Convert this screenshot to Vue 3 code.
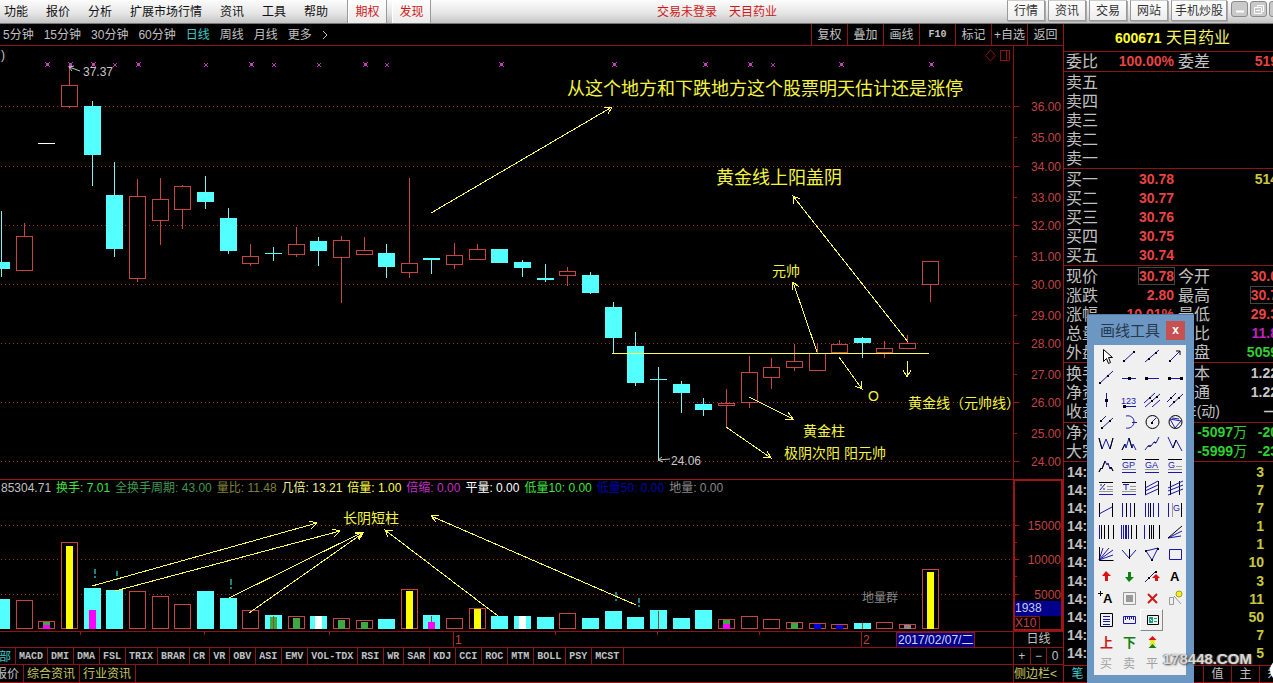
<script setup>
const menus = ['功能', '报价', '分析', '扩展市场行情', '资讯', '工具', '帮助']
const quickLinks = ['行情', '资讯', '交易', '网站', '手机炒股']
const periods = ['5分钟', '15分钟', '30分钟', '60分钟', '日线', '周线', '月线', '更多']
const chartActions = ['复权', '叠加', '画线', 'F10', '标记', '+自选', '返回']
const indicators = ['全部', 'MACD', 'DMI', 'DMA', 'FSL', 'TRIX', 'BRAR', 'CR', 'VR', 'OBV', 'ASI', 'EMV', 'VOL-TDX', 'RSI', 'WR', 'SAR', 'KDJ', 'CCI', 'ROC', 'MTM', 'BOLL', 'PSY', 'MCST']
const feeds = ['报价', '综合资讯', '行业资讯']

// kind, body top, body bottom, wick top, wick bottom, volume top, inner volume marks
const days = [
  ['c', 262, 269, 211, 277, 599],
  ['r', 236, 271, 223, 271, 600],
  ['w', 143, 144, 143, 144, 621, [['green', 622], ['magenta', 625]]],
  ['r', 85, 107, 66, 108, 542, [['yellow', 546]]],
  ['c', 106, 155, 101, 186, 588, [['magenta', 610]]],
  ['c', 195, 249, 162, 257, 590],
  ['r', 196, 279, 179, 282, 591],
  ['r', 199, 221, 178, 245, 596],
  ['r', 186, 210, 185, 229, 604],
  ['c', 192, 202, 176, 209, 591],
  ['c', 218, 251, 208, 254, 598],
  ['r', 256, 264, 244, 266, 610],
  ['c', 253, 254, 247, 261, 615, [['green', 617], ['slit', 616]]],
  ['r', 244, 255, 227, 257, 616, [['green', 618]]],
  ['c', 241, 251, 237, 266, 616, [['white', 616]]],
  ['r', 240, 258, 236, 303, 618, [['green', 620]]],
  ['r', 250, 255, 237, 255, 620, [['green', 622]]],
  ['c', 253, 267, 244, 278, 619],
  ['r', 263, 273, 178, 278, 589, [['yellow', 591]]],
  ['c', 258, 260, 258, 274, 615, [['slit', 616], ['magenta', 622]]],
  ['r', 255, 265, 243, 269, 618],
  ['r', 249, 260, 244, 260, 608, [['yellow', 609]]],
  ['c', 249, 263, 249, 263, 616],
  ['c', 262, 268, 260, 277, 616, [['white', 616]]],
  ['c', 278, 280, 264, 282, 617],
  ['r', 271, 276, 267, 286, 613],
  ['c', 275, 293, 272, 294, 618],
  ['c', 307, 338, 302, 353, 611],
  ['c', 346, 383, 332, 386, 617],
  ['c', 379, 380, 367, 460, 610, [['slit', 611]]],
  ['c', 384, 393, 381, 413, 618],
  ['c', 404, 410, 398, 416, 610],
  ['r', 403, 406, 389, 427, 619, [['green', 620], ['magenta', 624]]],
  ['r', 372, 403, 356, 408, 616],
  ['r', 367, 378, 358, 389, 619],
  ['r', 361, 368, 344, 371, 622, [['green', 623]]],
  ['r', 353, 371, 343, 371, 623, [['blue', 624]]],
  ['r', 344, 353, 340, 353, 624, [['blue', 625]]],
  ['c', 338, 343, 337, 358, 623, [['slit', 623]]],
  ['r', 348, 353, 341, 358, 622],
  ['r', 343, 349, 335, 349, 624, [['gray', 625]]],
  ['r', 261, 285, 261, 302, 569, [['yellow', 572]]]
].map(([kind, top, bottom, high, low, vol, marks = []], i) => ({
  kind, top, bottom, high, low, vol, marks,
  x: Math.floor(22.65 * i - 6.4),
  up: kind === 'r',
  volUp: kind !== 'c'
}))

const gridY = [106, 166, 225, 284, 343, 402, 461]
const prices = [[36, 106], [35, 137], [34, 166], [33, 197], [32, 225], [31, 256], [30, 284], [29, 315], [28, 343], [27, 374], [26, 402], [25, 433], [24, 461]]
const volGrid = [[15000, 525], [10000, 559], [5000, 594]]
const bigMarks = [47, 70, 93, 138, 251, 365, 501, 614, 705, 750, 841, 931]
const smallMarks = [115, 206, 274, 319, 387, 773]

function arrow(x1, y1, x2, y2, size = 8) {
  const a = Math.atan2(y2 - y1, x2 - x1)
  const p = (d) => `${Math.round(x2 - size * Math.cos(a + d))} ${Math.round(y2 - size * Math.sin(a + d))}`
  return `M${x1} ${y1}L${x2} ${y2}M${p(0.5)}L${x2} ${y2}L${p(-0.5)}`
}
const priceArrows = [
  arrow(431, 213, 612, 107), arrow(908, 342, 793, 196), arrow(817, 352, 793, 282),
  arrow(839, 357, 862, 389), arrow(907, 361, 907, 377), arrow(749, 397, 793, 419), arrow(726, 427, 771, 458)
]
const volArrows = [
  arrow(92, 586, 317, 523), arrow(115, 591, 340, 531), arrow(229, 598, 363, 532),
  arrow(249, 613, 363, 533), arrow(498, 616, 385, 530), arrow(636, 605, 431, 516)
]
const notes = [
  [567, 95, 18, '从这个地方和下跌地方这个股票明天估计还是涨停'],
  [716, 184, 18, '黄金线上阳盖阴'],
  [772, 276, 14, '元帅'],
  [868, 401, 14, 'O'],
  [908, 408, 14, '黄金线（元帅线）'],
  [803, 436, 14, '黄金柱'],
  [784, 458, 14, '极阴次阳 阳元帅']
]
const stats = [
  ['85304.71', 'silver'], ['换手: 7.01', 'lime'], ['全换手周期: 43.00', 'moss'], ['量比: 11.48', 'olive'],
  ['几倍: 13.21', 'lemon'], ['倍量: 1.00', 'yellow'], ['倍缩: 0.00', 'violet'], ['平量: 0.00', 'bright'],
  ['低量10: 0.00', 'lime'], ['低量50: 0.00', 'navy'], ['地量: 0.00', 'ash']
]

const asks = ['卖五', '卖四', '卖三', '卖二', '卖一']
const bids = [['买一', '30.78', '514'], ['买二', '30.77', ''], ['买三', '30.76', ''], ['买四', '30.75', ''], ['买五', '30.74', '']]
const quote = [
  ['现价', '30.78', '今开', '30.0', 'red', true, false],
  ['涨跌', '2.80', '最高', '30.7', 'red', false, true],
  ['涨幅', '10.01%', '最低', '29.3', 'red'],
  ['总量', '', '量比', '11.8', 'violet'],
  ['外盘', '', '内盘', '5059', 'lime']
]
const basics = [['换手', '股本', '1.22'], ['净资', '流通', '1.22'], ['收益', 'PE(动)', '—']]
const flows = [['净流', '-5097', '-20'], ['大宗', '-5999', '-23']]
const ticks = [3, 7, 7, 1, 1, 10, 3, 11, 50, 7, 5]

const dot = (x, y) => `M${x - 1} ${y - 1}h3v3h-3z`
const pip = (x, y) => `M${x - 1} ${y - 1}h2v2h-2z`
// Each tool: name, then layers of [class, path], then optional glyph [class, x, y, text]
const tools = [
  ['选择', [['white', 'M5.5 1.5v12l3-3 2 5 2-1-2-5h4z']]],
  ['线段', [['b', 'M2 14L14 3'], ['kf', pip(3, 13) + pip(13, 4)]]],
  ['直线', [['b', 'M1 14L15 2'], ['kf', pip(5, 11) + pip(12, 5)]]],
  ['箭头', [['b', 'M2 14L13 3'], ['k', 'M9 3h4v4'], ['kf', pip(3, 13)]]],
  ['射线', [['b', 'M1 14L15 1'], ['kf', pip(2, 13) + pip(10, 6)]]],
  ['水平直线', [['b', 'M1 8.5h14'], ['kf', dot(8, 8)]]],
  ['水平射线', [['b', 'M2 8.5h13'], ['kf', dot(2, 8)]]],
  ['水平线段', [['b', 'M2 8.5h12'], ['kf', dot(2, 8) + dot(14, 8)]]],
  ['垂直线', [['b', 'M8.5 1v14'], ['kf', dot(8, 8)]]],
  ['价格标注', [['b', 'M3 14.5h12'], ['kf', dot(3, 14)]], ['tb', 0, 12, '123']],
  ['平行线', [['b', 'M0 11L11 1M1 15L16 2M8 15L16 8'], ['kf', pip(6, 6) + pip(8, 9) + pip(13, 5)]]],
  ['等距线', [['b', 'M0 10L9 1M2 15L16 2'], ['kf', pip(4, 6) + pip(7, 10) + pip(12, 6)]]],
  ['平行线段', [['b', 'M2 8L8 2M3 15L15 4'], ['kf', pip(3, 7) + pip(4, 14) + pip(12, 7)]]],
  ['圆弧', [['b', 'M5 2c5-1 8 2 8 6s-4 7-8 6M11 8.500h5']]],
  ['圆', [['k', 'M15 8a6.5 6.5 0 1 1-13 0a6.5 6.5 0 1 1 13 0'], ['b', 'M8 8L12 4'], ['kf', pip(8, 9)]]],
  ['外接圆', [['k', 'M15 8a6.5 6.5 0 1 1-13 0a6.5 6.5 0 1 1 13 0'], ['b', 'M3 5l11 2-6 7zM5 4l7 1']]],
  ['W波浪', [['b', 'M1 2l3 11 4-10 4 10 3-11'], ['k', 'M1 2l3 11M12 13l3-11']]],
  ['头肩形', [['b', 'M1 14l3-6 1 4 3-10 3 10 1-4 3 6'], ['k', 'M1 14l3-6M8 2l3 10']]],
  ['上升浪', [['b', 'M1 14l3-4h3l3-4 2 1 3-6'], ['k', 'M4 10h3M10 6l2 1']]],
  ['下降浪', [['b', 'M1 1l5 11 3-8 6 11'], ['k', 'M6 12l3-8']]],
  ['八浪线', [['b', 'M1 14l2-4 1 1 3-8 2 4 1-2 2 6 1-2 2 4'], ['k', 'M1 14l2-4 1 1 3-8M12 11l1-2 2 4']]],
  ['黄金价位', [['k', 'M1 1.5h14'], ['g', 'M1 11.5h14'], ['b', 'M1 14.5h14']], ['tb', 1, 10, 'GP']],
  ['黄金目标', [['k', 'M1 1.5h14'], ['g', 'M1 11.5h14'], ['b', 'M1 14.5h14']], ['tb', 1, 10, 'GA']],
  ['黄金分割', [['k', 'M1 1.5h14'], ['g', 'M9 8.5h6M1 11.5h14'], ['b', 'M1 14.5h14']], ['tb', 1, 10, 'G']],
  ['百分比', [['k', 'M1 2.5h14'], ['g', 'M9 6.5h6M9 9.5h6M1 11.5h14'], ['b', 'M1 14.5h14M2 10l5-6M2 5h2M5 9h2']]],
  ['波段线', [['k', 'M1 2.5h14'], ['g', 'M9 6.5h6M9 9.5h6M1 11.5h14'], ['b', 'M1 14.5h14M2 4.5h6M5 4v6']]],
  ['通道线', [['k', 'M1.5 1v14M14.5 1v14'], ['b', 'M1 8L14 1M1 11L14 5M1 15L14 9']]],
  ['回归带', [['k', 'M3.5 1v14M12.5 1v14'], ['b', 'M1 8L16 1M1 11L16 5M1 15L16 9']]],
  ['线性回归', [['k', 'M1.5 1v14M14.5 1v14'], ['b', 'M1 12L14 5']]],
  ['周期线', [['b', 'M1.5 1v14M9.5 1v14'], ['k', 'M5.5 1v14M13.5 1v14']]],
  ['等距周期', [['b', 'M1.5 1v14M4.5 1v14M9.5 1v14M14.5 1v14'], ['k', 'M6.5 1v14']]],
  ['黄金周期', [['b', 'M1.5 1v14'], ['g', 'M5.5 1v14'], ['k', 'M14.5 1v14']], ['tb', 6, 9, 'G']],
  ['斐波那契', [['b', 'M1.5 1v14'], ['k', 'M3.5 1v14M6.5 1v14M10.5 1v14M15.5 1v14']]],
  ['卢卡斯', [['b', 'M.5 1v14M2.5 1v14M4.5 1v14M5.5 1v14M7.5 1v14'], ['k', 'M10.5 1v14M15.5 1v14']]],
  ['江恩周期', [['b', 'M.5 1v14'], ['k', 'M5.5 1v14M7.5 1v14M9.5 1v14M15.5 1v14']]],
  ['阻速线', [['b', 'M1 14L15 7M1 14l13-2'], ['k', 'M1 14L15 2']]],
  ['江恩角度', [['b', 'M1 14L5 2M1 14L11 2M1 14L15 4M1 14L15 9'], ['k', 'M1.5 1v13.5h14']]],
  ['三叉线', [['b', 'M1 4l7 8 7-8'], ['k', 'M8.5 3v10']]],
  ['三角形', [['b', 'M2 5l12-3-6 12z'], ['kf', pip(2, 5) + pip(14, 3) + pip(8, 14)]]],
  ['矩形', [['b', 'M2.5 3.5h12v10h-12z']]],
  ['上箭头', [['rf', 'M8 3l5 5h-3v5h-3V8H4z']]],
  ['下箭头', [['nf', 'M8 14l5-5h-3V4h-3v5H4z']]],
  ['箭头标记', [['b', 'M1 14L12 3'], ['kf', pip(5, 10) + pip(12, 4)], ['rf', 'M12 6l4 4h-2v3h-3v-3h-3z']]],
  ['文字', [], ['tk', 3, 13, 'A']],
  ['注释', [['k', 'M0 3.5h5M2.5 1v5']], ['tk', 5, 13, 'A']],
  ['设置', [['g', 'M2.5 2.5h12v12h-12z'], ['gf', 'M5 5h7v7H5z']]],
  ['删除', [['r2', 'M4 4l9 9M13 4l-9 9']]],
  ['隐藏', [['g', 'M2.5 7.5h4v7h-4zM7 6l7 8'], ['yf', 'M15 4a3 3 0 1 1-6 0a3 3 0 1 1 6 0']]],
  ['列表', [['k', 'M2.5 1.5h12v13h-12z'], ['b', 'M5 4.5h7M5 7.5h7M5 9.5h7M5 12.5h7']]],
  ['标尺', [['b', 'M2.5 4.5h12v7h-12z'], ['b', 'M4.5 5v3M6.5 5v2M8.5 5v3M10.5 5v2M12.5 5v3']]],
  ['联动', [['k', 'M3.5 3.5h11v9h-11z'], ['tf', 'M5 5h4v6H5z'], ['teal', 'M10 6.5h3M10 9.5h3'], ['wl', 'M6 7l2 2']], null, true],
  null,
  ['上', [], ['tr', 2, 13, '上']],
  ['下', [], ['tn', 2, 13, '下']],
  ['涨跌标记', [['yf2', 'M5 6h7l-2 2 2 3H5l2-3z'], ['rf', 'M8.5 2l4 4h-8z'], ['nf', 'M8.5 10l4 4h-8z']]],
  null,
  ['买', [], ['tg', 2, 12, '买']],
  ['卖', [], ['tg', 2, 12, '卖']],
  ['平', [], ['tg', 2, 12, '平']],
  null
]
</script>

<template>
  <div class="terminal">
    <header class="menubar">
      <nav class="menus">
        <button v-for="m in menus" :key="m">{{ m }}</button>
      </nav>
      <nav class="featured">
        <button>期权</button>
        <button>发现</button>
      </nav>
      <div class="session"><span>交易未登录</span><span>天目药业</span></div>
      <nav class="quick">
        <button v-for="q in quickLinks" :key="q">{{ q }}</button>
      </nav>
      <div class="winctl">
        <button aria-label="最小化"><svg width="16" height="15"><path d="M4 9.5h8" /></svg></button>
        <button aria-label="还原"><svg width="16" height="15"><path class="thin" d="M6.5 5.5v-2h6v6h-2M3.5 5.5h7v6h-7zM5 8.5h4" /></svg></button>
        <button aria-label="关闭"><svg width="16" height="15"><path d="M4 4l8 7M12 4l-8 7" /></svg></button>
      </div>
    </header>

    <div class="body">
      <main class="left">
        <div class="toolbar">
          <nav class="periods">
            <button v-for="p in periods" :key="p" :class="{ on: p === '日线' }">{{ p }}</button>
            <button aria-label="展开周期"><svg width="6" height="12"><path class="chev" d="M1 2l4 4-4 4" /></svg></button>
          </nav>
          <nav class="actions">
            <button v-for="a in chartActions" :key="a" :class="{ mono: a === 'F10' }">{{ a }}</button>
          </nav>
        </div>

        <section class="pane price">
          <svg class="plot" height="433" role="img" aria-label="日线K线图">
            <g transform="translate(0,-46)">
              <path v-for="y in gridY" :key="y" class="grid" :d="`M1 ${y}.5H2000`" />
              <g v-for="(d, i) in days" :key="i" :class="['k', d.kind]">
                <template v-if="d.up">
                  <rect class="wick" :x="d.x + 8" :y="d.high" width="1" :height="d.top - d.high" />
                  <rect class="wick" :x="d.x + 8" :y="d.bottom" width="1" :height="d.low - d.bottom" />
                  <rect class="box" :x="d.x + .5" :y="d.top + .5" width="16" :height="d.bottom - d.top - 1" />
                </template>
                <template v-else>
                  <rect class="wick" :x="d.x + 8" :y="d.high" width="1" :height="d.low - d.high" />
                  <rect class="fill" :x="d.x" :y="d.top" width="17" :height="d.bottom - d.top" />
                </template>
              </g>
              <g v-for="x in bigMarks" :key="x">
                <path class="mark" :d="`M${x - 2} 62l5 5M${x + 3} 62l-5 5`" />
                <rect class="core" :x="x - 1" y="63" width="3" height="3" />
              </g>
              <path v-for="x in smallMarks" :key="x" class="mark" :d="`M${x - 2} 63l4 4M${x + 2} 63l-4 4`" />
              <path class="note-line" d="M612 353.5H929" />
              <path v-for="d in priceArrows" :key="d" class="note-line" :d="d" />
              <path class="peak" :d="arrow(80, 71, 69, 67, 5)" />
              <path class="peak" :d="arrow(670, 459, 658, 460, 5)" />
              <text class="peak-label" x="83" y="76">37.37</text>
              <text class="peak-label" x="671" y="465">24.06</text>
              <text class="peak-label" x="1" y="59">)</text>
              <text v-for="n in notes" :key="n[3]" class="note" :x="n[0]" :y="n[1]" :font-size="n[2]">{{ n[3] }}</text>
              <path class="corner" d="M990.5 50l5 5.5-5 5.5-5-5.5zM1000.5 50.5h9v10h-9zM1006.5 50v10" />
            </g>
          </svg>
          <svg class="axis" width="50" height="433">
            <g transform="translate(0,-46)">
              <g v-for="([p, y], i) in prices" :key="p">
                <path class="tick" :d="`M0 ${y}.5h${i % 2 ? 3 : 5}`" />
                <text class="scale" x="47" :y="y + 5">{{ p.toFixed(2) }}</text>
              </g>
            </g>
          </svg>
        </section>

        <section class="pane volume">
          <div class="volplot">
            <div class="stats"><span v-for="s in stats" :key="s[0]" :class="s[1]">{{ s[0] }}</span></div>
            <svg class="plot" height="135" role="img" aria-label="成交量图">
              <g transform="translate(0,-496)">
                <path v-for="g in volGrid" :key="g[0]" class="grid" :d="`M1 ${g[1]}.5H2000`" />
                <g v-for="(d, i) in days" :key="i" :class="['k', d.volUp ? 'r' : 'c']">
                  <rect v-if="d.volUp" class="box" :x="d.x + .5" :y="d.vol + .5" width="16" :height="628 - d.vol" />
                  <rect v-else class="fill" :x="d.x" :y="d.vol" width="17" :height="629 - d.vol" />
                  <rect v-for="m in d.marks" :key="m[0]" :class="'v-' + m[0]" :x="m[0] === 'slit' ? d.x + 8 : d.x + 5" :y="m[1]" :width="m[0] === 'slit' ? 1 : 7" :height="629 - m[1]" />
                </g>
                <path class="bang" d="M95 569v5M95 576v2M117 571v5M117 578v2M231 579v6M231 587v2M616 592v5M616 599v2M639 598v5M639 605v2" />
                <path v-for="d in volArrows" :key="d" class="note-line" :d="d" />
                <text class="note" x="343" y="523" font-size="14">长阴短柱</text>
                <text class="herd" x="862" y="602">地量群</text>
              </g>
            </svg>
          </div>
          <div class="volaxis">
            <svg width="46" height="120">
              <g transform="translate(0,-481)">
                <g v-for="g in volGrid" :key="g[0]">
                  <path class="tick" :d="`M0 ${g[1]}.5h4M0 ${g[1] + 17}.5h2`" />
                  <text class="scale" x="46" :y="g[1] + 5">{{ g[0] }}</text>
                </g>
              </g>
            </svg>
            <div class="cursor">1938</div>
            <div class="unit">X10</div>
          </div>
        </section>

        <section class="timeline">
          <svg class="plot" height="15">
            <path class="tick" d="M80.5 0v3M204.5 0v3M329.5 0v3M453.5 0v15M555.5 0v3M657.5 0v3M759.5 0v3M861.5 0v15" />
            <text class="month" x="455" y="12">1</text>
            <text class="month" x="863" y="12">2</text>
            <rect class="datebox" x="896.5" y=".5" width="78" height="15" />
            <text class="date" x="898" y="12">2017/02/07/二</text>
          </svg>
          <div class="side">日线</div>
        </section>

        <section class="tabs">
          <nav class="inds">
            <button v-for="n in indicators" :key="n" :class="{ cn: n === '全部' }">{{ n }}</button>
          </nav>
          <div class="side zoomers"><button>+</button><button>−</button><button>0</button></div>
        </section>

        <footer class="feeds">
          <nav>
            <button v-for="(f, i) in feeds" :key="f" :class="{ gray: !i }">{{ f }}</button>
          </nav>
          <button class="side">侧边栏&lt;</button>
        </footer>
      </main>

      <aside class="quotes">
        <h1><b>600671</b> 天目药业</h1>
        <table class="q first">
          <colgroup><col class="c1"><col class="c2"><col class="c3"><col class="c4"></colgroup>
          <tbody><tr><th>委比</th><td>100.00%</td><th>委差</th><td>519</td></tr></tbody>
        </table>
        <div class="sec">
          <table class="q">
            <tbody><tr v-for="a in asks" :key="a"><th>{{ a }}</th></tr></tbody>
          </table>
        </div>
        <div class="sec">
          <table class="q">
            <colgroup><col class="c1"><col class="c2"><col class="c3"><col class="c4"></colgroup>
            <tbody><tr v-for="b in bids" :key="b[0]"><th>{{ b[0] }}</th><td>{{ b[1] }}</td><th></th><td class="vol">{{ b[2] }}</td></tr></tbody>
          </table>
        </div>
        <div class="sec">
          <table class="q">
            <colgroup><col class="c1"><col class="c2"><col class="c3"><col class="c4"></colgroup>
            <tbody>
              <tr v-for="r in quote" :key="r[0]">
                <th>{{ r[0] }}</th><td><span :class="{ framed: r[5] }">{{ r[1] }}</span></td>
                <th>{{ r[2] }}</th><td :class="r[4]"><span :class="{ framed: r[6] }">{{ r[3] }}</span></td>
              </tr>
            </tbody>
          </table>
        </div>
        <div class="sec loose">
          <table class="q">
            <colgroup><col class="c1"><col class="c2"><col class="c3"><col class="c4"></colgroup>
            <tbody>
              <tr v-for="b in basics" :key="b[0]"><th>{{ b[0] }}</th><td></td><th :class="{ pe: b[1].length > 2 }">{{ b[1] }}</th><td class="plain">{{ b[2] }}</td></tr>
            </tbody>
          </table>
        </div>
        <div class="sec tight">
          <table class="q">
            <colgroup><col class="c1"><col class="f2"><col class="f3"></colgroup>
            <tbody>
              <tr v-for="f in flows" :key="f[0]"><th>{{ f[0] }}</th><td class="lime">{{ f[1] }}<i>万</i></td><td class="lime">{{ f[2] }}</td></tr>
            </tbody>
          </table>
        </div>
        <table class="trades">
          <tbody><tr v-for="(t, i) in ticks" :key="i"><th>14:</th><td>{{ t }}</td></tr></tbody>
        </table>
        <nav class="modes">
          <button class="on">笔</button><span class="rest"></span>
          <button>值</button><button>主</button><button>筹</button>
        </nav>
      </aside>
    </div>

    <section class="palette" aria-label="画线工具">
      <header><h2>画线工具</h2><button class="close" aria-label="关闭画线工具">x</button></header>
      <div class="tools">
        <template v-for="(t, i) in tools" :key="i">
          <button v-if="t" :aria-label="t[0]" :class="{ pressed: t[3] }">
            <svg width="16" height="16" viewBox="0 0 16 16">
              <path v-for="(l, j) in t[1]" :key="j" :class="'i-' + l[0]" :d="l[1]" />
              <text v-if="t[2]" :class="t[2][0]" :x="t[2][1]" :y="t[2][2]">{{ t[2][3] }}</text>
            </svg>
          </button>
          <span v-else></span>
        </template>
      </div>
    </section>
    <div class="watermark">178448.COM</div>
    <div class="bubble"></div>
  </div>
</template>

<style>
body { background: #000; overflow: hidden; }
</style>

<style scoped>
.terminal {
  position: relative; display: flex; flex-direction: column; min-height: 100vh; overflow: hidden;
  background: #000; color: #c0c0c0;
  font: 12px/14px "Liberation Sans", "Noto Sans CJK SC", sans-serif;
}
button { appearance: none; margin: 0; padding: 0; border: 0; background: none; color: inherit; font: inherit; white-space: nowrap; }
svg { display: block; }

.menubar { display: flex; height: 24px; box-sizing: border-box; border-bottom: 1px solid #777; background: linear-gradient(#fdfdfd, #e4e4e4 60%, #c4c4c4); color: #111; }
.menus { display: flex; gap: 18px; padding: 0 19px 0 4px; }
.featured { display: flex; gap: 5px; border-left: 1px solid #999; color: #d01818; }
.featured button { width: 39px; border-right: 1px solid #999; border-left: 1px solid #fff; background: linear-gradient(#fff, #eaeaea); }
.session { flex: 1; display: flex; gap: 12px; justify-content: center; align-items: center; padding-right: 4px; color: #d01818; }
.quick { display: flex; gap: 3px; }
.quick button { min-width: 38px; height: 21px; padding: 0 6px; border: 1px solid #999; border-top-color: #ccc; background: linear-gradient(#fff, #ececec); box-shadow: 1px 1px 0 #aaa; color: #333; }
.quick button:last-child { padding: 0 3px; }
.winctl { display: flex; gap: 2px; margin: 1px -13px 0 4px; }
.winctl button { width: 17px; height: 16px; border: 1px solid #8a8a8a; border-radius: 3px; background: #c9c9c9; overflow: hidden; }
.winctl path { fill: none; stroke: #fff; stroke-width: 2; }
.winctl .thin { stroke-width: 1; }

.body { flex: 1; display: flex; }
.left { flex: 1; min-width: 0; display: flex; flex-direction: column; }
.toolbar { display: flex; justify-content: space-between; height: 22px; box-sizing: border-box; border-bottom: 1px solid #8c1414; }
.periods { display: flex; gap: 10px; padding-left: 3px; }
.periods .on { color: #40c8c8; }
.chev { fill: none; stroke: #c0c0c0; }
.actions { display: flex; }
.actions button { width: 36px; border-left: 1px solid #8c1414; }
.actions .mono { font: 700 10px/14px "Liberation Mono", monospace; }

.pane { display: flex; }
.plot { flex: 1; min-width: 0; width: 100%; }
.price { flex: 1; min-height: 433px; }
.axis { border-left: 1px solid #8c1414; box-sizing: border-box; flex: none; }
.volume { height: 152px; box-sizing: border-box; border-top: 1px solid #a01414; }
.volplot { flex: 1; min-width: 0; display: flex; flex-direction: column; }
.stats { display: flex; gap: 5px; height: 16px; padding-left: 1px; line-height: 17px; white-space: nowrap; overflow: hidden; }
.volaxis { width: 50px; box-sizing: border-box; border: 2px solid #a01414; border-top-width: 1px; overflow: hidden; }
.cursor { height: 15px; background: #00008c; color: #c8c8e8; line-height: 14px; }
.unit { width: 24px; border: 1px solid #8c1414; border-left: 0; color: #c04444; line-height: 13px; }

.grid { stroke: #a03030; stroke-dasharray: 1 3; shape-rendering: crispEdges; }
.k rect { shape-rendering: crispEdges; }
.r .box { fill: #000; stroke: #c84444; }
.r .wick { fill: #c84444; }
.c .fill { fill: #54ffff; }
.c .wick { fill: #80f0f0; }
.w .fill, .w .wick { fill: #fff; }
.v-green { fill: #40a840; }
.v-magenta { fill: #ff00ff; }
.v-yellow { fill: #ffff00; }
.v-white { fill: #fff; }
.v-blue { fill: #0000e8; }
.v-gray { fill: #888; }
.k .v-slit { fill: #905030; }
.mark { stroke: #b838b8; fill: none; }
.core { fill: #c040c0; }
.note-line { fill: none; stroke: #ffff54; shape-rendering: crispEdges; }
.note { fill: #f4f440; }
.peak { fill: none; stroke: #c8c8c8; }
.peak-label { fill: #c8c8c8; }
.corner { fill: none; stroke: #8c1414; }
.tick { stroke: #a01414; shape-rendering: crispEdges; }
.scale { fill: #c04444; text-anchor: end; }
.bang { stroke: #1c8484; stroke-width: 2; shape-rendering: crispEdges; }
.herd { fill: #888; }

.timeline { display: flex; height: 16px; box-sizing: border-box; border-top: 1px solid #8c1414; }
.month { fill: #c04444; }
.datebox { fill: #00008c; stroke: #8c1414; }
.date { fill: #d8d8f0; }
.side { flex: none; width: 50px; box-sizing: border-box; border-left: 1px solid #8c1414; text-align: center; }
.tabs, .feeds { display: flex; justify-content: space-between; box-sizing: border-box; border-top: 1px solid #8c1414; }
.tabs { height: 17px; }
.inds, .feeds nav { display: flex; }
.inds { margin-left: -16px; }
.inds button { padding: 2px 4px 0 3px; border-right: 1px solid #8c1414; font: 700 10px/14px "Liberation Mono", monospace; color: #c0c0c0; }
.inds .cn { padding-top: 0; font: 12px/14px "Noto Sans CJK SC", sans-serif; color: #40c8c8; }
.zoomers { display: flex; }
.zoomers button { flex: 1; border-right: 1px solid #8c1414; }
.zoomers button:last-child { border: 0; }
.feeds { height: 19px; border-bottom: 1px solid #a01414; color: #c8c864; }
.feeds nav { margin-left: -8px; }
.feeds nav button { padding: 0 4px 0 3px; border-right: 1px solid #8c1414; }
.feeds .gray { color: #c0c0c0; }
.feeds .side { border-left: 1px solid #8c1414; text-align: left; }

.quotes { flex: none; width: 210px; box-sizing: border-box; border-left: 1px solid #a01414; overflow: hidden; display: flex; flex-direction: column; }
h1 { margin: 0; height: 27px; padding-left: 8px; border-bottom: 1px solid #8c1414; text-align: center; font: 16px/28px "Liberation Sans", "Noto Sans CJK SC", sans-serif; color: #f4f46c; }
h1 b { font-size: 14px; color: #ffff30; }
.q { table-layout: fixed; width: 214px; border-collapse: collapse; }
.q tr { height: 19px; }
.q th, .q td { height: 19px; padding: 0; line-height: 19px; white-space: nowrap; }
.q th { text-align: left; padding-left: 2px; font-weight: 400; font-size: 16px; color: #c0c0c0; }
.q td { text-align: right; font-weight: 700; font-size: 14px; color: #e84444; }
.q td + th { padding-left: 4px; }
.q .pe { font-size: 14px; }
.c1 { width: 34px; } .c2 { width: 76px; } .c3 { width: 40px; } .c4 { width: 64px; }
.f2 { width: 149px; } .f3 { width: 31px; }
.first { border-bottom: 1px solid #8c1414; }
.sec { border-bottom: 1px solid #8c1414; padding-top: 1px; }
.loose { padding-bottom: 1px; }
.tight { padding-top: 0; }
.framed { outline: 1px solid #444; }
.q i { font-style: normal; font-weight: 400; }
.q .vol { color: #c8c83c; }
.q .plain { color: #c8c8c8; }
.q .violet { color: #c020c0; }
.q .lime { color: #30d030; }
.trades { flex: 1; width: 200px; border-collapse: collapse; margin: 1px 0 3px; font-size: 14px; font-weight: 700; }
.trades th, .trades td { height: 18px; padding: 0; line-height: 18px; }
.trades th { text-align: left; padding-left: 3px; color: #c0c0c0; }
.trades td { text-align: right; color: #c8c83c; }
.modes { display: flex; height: 18px; box-sizing: border-box; border-top: 1px solid #a01414; border-bottom: 1px solid #a01414; }
.modes button, .rest { flex: none; width: 28px; box-sizing: border-box; border-right: 1px solid #8c1414; }
.rest { width: 112px; }
.modes .on { color: #40c8c8; }

.silver { color: #c0c0c0; } .lime { color: #40e040; } .moss { color: #409850; } .olive { color: #80803c; }
.lemon { color: #f4f490; } .yellow { color: #ffff40; } .violet { color: #c030c0; } .bright { color: #fff; }
.navy { color: #0000b0; } .ash { color: #888; }

.palette { position: absolute; top: 314px; right: 79px; width: 107px; box-sizing: border-box; padding: 0 8px 8px 7px; background: #6b97c2; border: solid #4f7ba6; border-width: 1px 0 0; }
.palette header { display: flex; align-items: center; justify-content: space-between; height: 30px; padding-left: 6px; }
h2 { margin: 0; font: 15px/20px "Noto Sans CJK SC", sans-serif; color: #26384c; }
.close { width: 19px; height: 19px; margin-right: 1px; background: #c75050; color: #fff; font-weight: 700; line-height: 16px; }
.tools { display: grid; grid-template-columns: repeat(4, 1fr); grid-auto-rows: 22px; background: #f0f0f0; }
.tools button { display: grid; place-items: center; }
.tools svg { overflow: visible; }
.tools .pressed { border: 1px solid #999; border-color: #fff #888 #888 #fff; box-sizing: border-box; }
.tools path { fill: none; stroke-width: 1; }
.tools .i-white { fill: #fff; stroke: #000; }
.tools .i-b { stroke: #1818b0; }
.tools .i-k { stroke: #000; }
.tools .i-g { stroke: #999; }
.tools .i-r2 { stroke: #d01818; stroke-width: 2; }
.tools .i-kf { fill: #000; }
.tools .i-rf { fill: #e01010; }
.tools .i-nf { fill: #108010; }
.tools .i-gf { fill: #999; }
.tools .i-yf { fill: #f0f020; stroke: #a0a020; }
.tools .i-yf2 { fill: #e8e820; }
.tools .i-tf { fill: #10a080; }
.tools .i-teal { stroke: #10a080; }
.tools .i-wl { stroke: #fff; }
.tb { font-size: 9px; fill: #1818b0; }
.tk { font-size: 13px; font-weight: 700; fill: #000; }
.tr { font-size: 13px; fill: #d01818; font-weight: 700; }
.tn { font-size: 13px; fill: #108010; font-weight: 700; }
.tg { font-size: 12px; fill: #a0a0a0; }
.watermark { position: absolute; top: 648px; right: 21px; font: 700 15px/22px "Liberation Sans", sans-serif; color: #d8d8d8; text-shadow: 1px 1px 2px #444, -1px 0 1px #888; }
.bubble { position: absolute; top: 659px; right: -19px; width: 22px; height: 22px; border-radius: 50%; background: #fff; }
</style>
